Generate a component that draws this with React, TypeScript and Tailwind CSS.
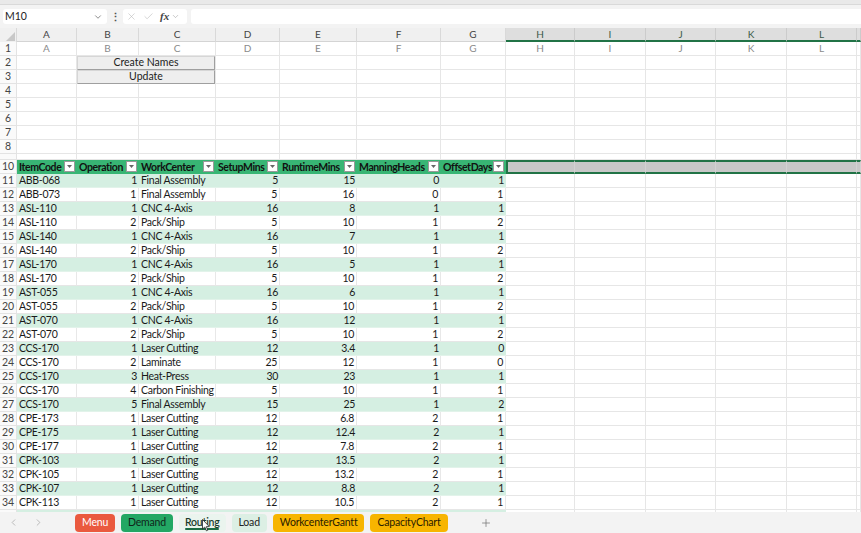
import { ChevronDown, ChevronLeft, ChevronRight, Check, X, Plus } from "lucide-react";

const cols = [
  { key: "A", w: "w-[60px]" },
  { key: "B", w: "w-[62px]" },
  { key: "C", w: "w-[77px]" },
  { key: "D", w: "w-[64px]" },
  { key: "E", w: "w-[77px]" },
  { key: "F", w: "w-[84px]" },
  { key: "G", w: "w-[65px]" },
  { key: "H", w: "w-[69px]" },
  { key: "I", w: "w-[71px]" },
  { key: "J", w: "w-[70px]" },
  { key: "K", w: "w-[71px]" },
  { key: "L", w: "w-[70px]" },
  { key: "M", w: "flex-1" },
];

const headers = ["ItemCode", "Operation", "WorkCenter", "SetupMins", "RuntimeMins", "ManningHeads", "OffsetDays"];

const rows: (string | number)[][] = [
  ["ABB-068", 1, "Final Assembly", 5, 15, 0, 1],
  ["ABB-073", 1, "Final Assembly", 5, 16, 0, 1],
  ["ASL-110", 1, "CNC 4-Axis", 16, 8, 1, 1],
  ["ASL-110", 2, "Pack/Ship", 5, 10, 1, 2],
  ["ASL-140", 1, "CNC 4-Axis", 16, 7, 1, 1],
  ["ASL-140", 2, "Pack/Ship", 5, 10, 1, 2],
  ["ASL-170", 1, "CNC 4-Axis", 16, 5, 1, 1],
  ["ASL-170", 2, "Pack/Ship", 5, 10, 1, 2],
  ["AST-055", 1, "CNC 4-Axis", 16, 6, 1, 1],
  ["AST-055", 2, "Pack/Ship", 5, 10, 1, 2],
  ["AST-070", 1, "CNC 4-Axis", 16, 12, 1, 1],
  ["AST-070", 2, "Pack/Ship", 5, 10, 1, 2],
  ["CCS-170", 1, "Laser Cutting", 12, 3.4, 1, 0],
  ["CCS-170", 2, "Laminate", 25, 12, 1, 0],
  ["CCS-170", 3, "Heat-Press", 30, 23, 1, 1],
  ["CCS-170", 4, "Carbon Finishing", 5, 10, 1, 1],
  ["CCS-170", 5, "Final Assembly", 15, 25, 1, 2],
  ["CPE-173", 1, "Laser Cutting", 12, 6.8, 2, 1],
  ["CPE-175", 1, "Laser Cutting", 12, 12.4, 2, 1],
  ["CPE-177", 1, "Laser Cutting", 12, 7.8, 2, 1],
  ["CPK-103", 1, "Laser Cutting", 12, 13.5, 2, 1],
  ["CPK-105", 1, "Laser Cutting", 12, 13.2, 2, 1],
  ["CPK-107", 1, "Laser Cutting", 12, 8.8, 2, 1],
  ["CPK-113", 1, "Laser Cutting", 12, 10.5, 2, 1],
];

function RowNum({ n, h = "h-[14px]" }: { n: string; h?: string }) {
  return (
    <div className={`w-[17px] shrink-0 ${h} flex items-center justify-center text-[10.5px] text-[#444] border-r border-b border-[#e3e3e3] bg-[#fafafa] overflow-hidden`}>
      {n}
    </div>
  );
}

function FilterBtn() {
  return (
    <span className="absolute right-[1px] top-[1px] w-[11px] h-[11px] bg-white border border-[#9a9a9a] flex items-center justify-center">
      <svg width="5" height="3" viewBox="0 0 5 3">
        <path d="M0 0 L5 0 L2.5 3 Z" fill="#666" />
      </svg>
    </span>
  );
}

function FormulaBar() {
  return (
    <div className="h-[23px] bg-[#f3f3f3] flex items-center gap-[4px] pl-[3px]">
      <div className="w-[104px] h-[15px] bg-white rounded-[3px] flex items-center justify-between pl-[2px] pr-[4px] text-[10.5px] text-[#222]">
        <span>M10</span>
        <ChevronDown size={10} strokeWidth={1.6} className="text-[#555]" />
      </div>
      <div className="w-[8px] flex justify-center text-[#555] text-[11px] font-bold leading-none">⋮</div>
      <div className="w-[64px] h-[15px] bg-white rounded-[3px] flex items-center gap-[6px] px-[3px]">
        <X size={11} strokeWidth={1.2} className="text-[#b5b5b5]" />
        <Check size={11} strokeWidth={1.2} className="text-[#b5b5b5]" />
        <span className="text-[11px] italic font-semibold text-[#444] font-['Liberation_Serif',serif] leading-none">
          fx
        </span>
        <ChevronDown size={9} strokeWidth={1.4} className="text-[#999] -ml-[4px]" />
      </div>
      <div className="flex-1 h-[15px] bg-white rounded-l-[3px]" />
    </div>
  );
}

function ColumnHeaders() {
  return (
    <div className="flex h-[14px] bg-[#f0f0f0]">
      <div className="w-[17px] shrink-0 border-r border-[#d9d9d9] relative">
        <svg className="absolute right-[1px] bottom-[1px]" width="9" height="9" viewBox="0 0 9 9">
          <path d="M9 0 L9 9 L0 9 Z" fill="#c8c8c8" />
        </svg>
      </div>
      {cols.map((c, i) => {
        const sel = i >= 7;
        return (
          <div
            key={c.key}
            className={`${c.w} shrink-0 flex items-center justify-center text-[10px] border-r ${
              sel
                ? "bg-[#dedede] text-[#3a5a48] border-[#cbcbcb] border-b-2 border-b-[#217346]"
                : "text-[#444] border-[#d9d9d9] border-b border-b-[#d4d4d4]"
            }`}
          >
            {c.key === "M" ? "" : c.key}
          </div>
        );
      })}
    </div>
  );
}

function PlainRow({ n, children, h = "h-[14px]" }: { n: string; children?: (i: number) => React.ReactNode; h?: string }) {
  return (
    <div className="flex">
      <RowNum n={n} h={h} />
      {cols.map((c, i) => (
        <div key={c.key} className={`${c.w} shrink-0 ${h} border-r border-b border-[#e6e6e6] relative`}>
          {children ? children(i) : null}
        </div>
      ))}
    </div>
  );
}

function TableHeaderRow() {
  return (
    <div className="flex">
      <RowNum n="10" />
      {cols.map((c, i) => {
        if (i < 7) {
          return (
            <div
              key={c.key}
              className={`${c.w} shrink-0 h-[14px] bg-[#38b574] border-r border-[#38b574] relative pl-[2px] text-[10.5px] tracking-[-0.4px] font-bold text-[#111] leading-[14px] overflow-hidden whitespace-nowrap`}
            >
              {headers[i]}
              <FilterBtn />
            </div>
          );
        }
        return (
          <div
            key={c.key}
            className={`${c.w} shrink-0 h-[14px] bg-[#c8c8c8] border-y-2 border-[#217346] ${i === 7 ? "border-l-2" : ""} border-r border-r-[#d2d2d2]`}
          />
        );
      })}
    </div>
  );
}

function DataRow({ n, data, band }: { n: string; data: (string | number)[]; band: boolean }) {
  return (
    <div className="flex">
      <RowNum n={n} />
      {cols.map((c, i) => {
        if (i < 7) {
          const v = data[i];
          const num = typeof v === "number";
          return (
            <div
              key={c.key}
              className={`${c.w} shrink-0 h-[14px] border-b leading-[13px] text-[10.5px] tracking-[-0.3px] text-[#1a1a1a] whitespace-nowrap overflow-visible ${
                band ? "bg-[#d5efe2] border-[#d5efe2] border-b-[#e2f3ea]" : "bg-white border-b-[#e6e6e6]"
              } ${num ? "text-right pr-[2px]" : "text-left pl-[2px]"} ${band ? "" : "border-r border-r-[#e8e8e8]"}`}
            >
              {v}
            </div>
          );
        }
        return <div key={c.key} className={`${c.w} shrink-0 h-[14px] border-r border-b border-[#e6e6e6]`} />;
      })}
    </div>
  );
}

function SheetButton({ label }: { label: string }) {
  return (
    <div className="absolute left-0 top-0 w-[138px] h-[14px] bg-[#eeeeee] border border-[#d6d6d6] border-r-[#9f9f9f] border-b-[#9f9f9f] flex items-center justify-center text-[10.5px] text-[#222] z-10">
      {label}
    </div>
  );
}

function Tab({ label, cls }: { label: string; cls: string }) {
  return (
    <div className={`h-[18px] px-[7px] rounded-[4px] flex items-center text-[10.5px] tracking-[-0.2px] ${cls}`}>{label}</div>
  );
}

export default function App() {
  return (
    <div className="w-[861px] h-[533px] overflow-hidden bg-white font-['Lato','Noto_Sans',sans-serif] flex flex-col">
      <div className="h-[5px] shrink-0 bg-[#e9e9e9] border-b border-[#d9d9d9]" />
      <FormulaBar />
      <ColumnHeaders />
      <div className="flex-1 overflow-hidden">
        <PlainRow n="1">
          {(i) =>
            i < 12 ? (
              <div className="h-full flex items-center justify-center text-[10px] text-[#8a8a8a]">{cols[i].key}</div>
            ) : null
          }
        </PlainRow>
        <PlainRow n="2">{(i) => (i === 1 ? <SheetButton label="Create Names" /> : null)}</PlainRow>
        <PlainRow n="3">{(i) => (i === 1 ? <SheetButton label="Update" /> : null)}</PlainRow>
        {["4", "5", "6", "7", "8"].map((n) => (
          <PlainRow key={n} n={n} />
        ))}
        <PlainRow n="" h="h-[6px]" />
        <TableHeaderRow />
        {rows.map((r, i) => (
          <DataRow key={i} n={String(11 + i)} data={r} band={i % 2 === 0} />
        ))}
        <DataRow n="" data={["", "", "", "", "", "", ""]} band={true} />
      </div>
      <div className="h-[21px] shrink-0 bg-[#f3f3f3] flex items-center text-[#222] relative">
        <div className="w-[70px] flex items-center gap-[14px] pl-[8px] text-[#a0a0a0]">
          <ChevronLeft size={11} strokeWidth={1.5} />
          <ChevronRight size={11} strokeWidth={1.5} />
        </div>
        <div className="flex items-center gap-[6px] pl-[5px]">
          <Tab label="Menu" cls="bg-[#ea5a3f] text-white" />
          <Tab label="Demand" cls="bg-[#23a764] text-[#10261a]" />
          <div className="h-[18px] px-[6px] rounded-[4px] flex flex-col items-center justify-center text-[10.5px] tracking-[-0.2px] bg-[#eaf4ee] font-semibold text-[#1b3a2a]">
            <span className="leading-[12px]">Routing</span>
            <span className="w-[34px] h-[2px] bg-[#1d6b43] rounded-full" />
          </div>
          <Tab label="Load" cls="bg-[#dcefe4] text-[#222]" />
          <Tab label="WorkcenterGantt" cls="bg-[#f7b500] text-[#2a2000]" />
          <Tab label="CapacityChart" cls="bg-[#f7b500] text-[#2a2000]" />
        </div>
        <div className="ml-[32px] text-[#777]">
          <Plus size={12} strokeWidth={1.5} />
        </div>
        <svg className="absolute left-[202px] top-[7px]" width="8" height="13" viewBox="0 0 8 13">
          <path d="M0.5 0.5 L0.5 10 L2.8 8 L4.4 11.8 L5.8 11.2 L4.3 7.6 L7.3 7.6 Z" fill="#fff" stroke="#222" strokeWidth="0.8" />
        </svg>
      </div>
    </div>
  );
}
